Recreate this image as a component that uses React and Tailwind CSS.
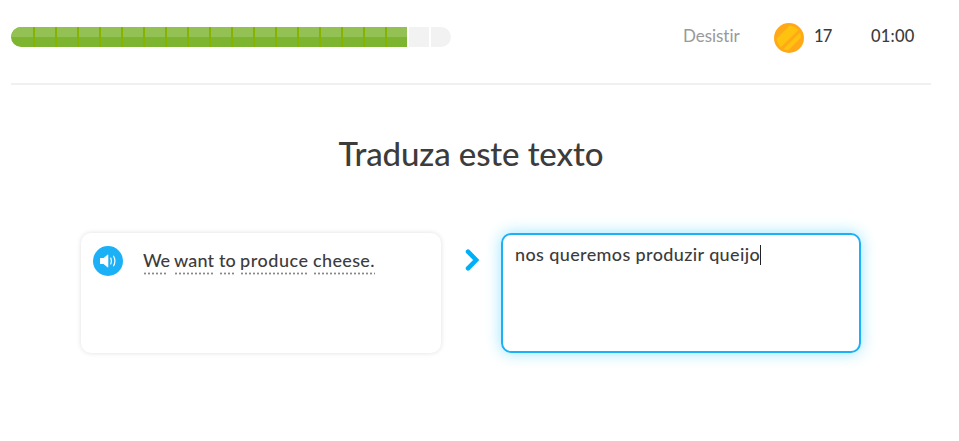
import React from "react";

const TOTAL = 20;
const DONE = 18;

function Progress() {
  return (
    <div className="flex h-5 w-[440px] overflow-hidden rounded-full">
      {Array.from({ length: TOTAL }, (_, i) => (
        <div
          key={i}
          className={
            (i === 0 ? "w-6" : i === TOTAL - 1 ? "w-5" : "w-[22px]") +
            " h-5 shrink-0 " +
            (i === TOTAL - 1 ? "" : "border-r-2 ") +
            (i < DONE - 1 ? "border-[#86b300] " : "border-white ") +
            (i < DONE ? "bg-[#7eb530]" : "bg-[#f2f2f2]")
          }
        >
          {i < DONE && <div className="h-2.5 bg-[#93c153]" />}
        </div>
      ))}
    </div>
  );
}

function Coin() {
  return (
    <svg width="30" height="30" viewBox="0 0 30 30">
      <circle cx="15" cy="15" r="15" fill="#ffa918" />
      <clipPath id="face">
        <circle cx="15" cy="15" r="12.2" />
      </clipPath>
      <g clipPath="url(#face)" stroke="#ffc20f">
        <path d="M-1 25.700 25.700 -1" strokeWidth="9.2" />
        <path d="M7 31.500 33 5.500" strokeWidth="4.200" />
      </g>
    </svg>
  );
}

function Speaker() {
  return (
    <svg width="30" height="30" viewBox="0 0 30 30" fill="none">
      <circle cx="15" cy="15" r="15" fill="#1cb0f6" />
      <path d="M7.5 12h3l4.300-3.400q.5-.3.5.3v12.2q0 .6-.5.3L10.500 18h-3q-.5 0-.5-.5v-5q0-.5.5-.5Z" fill="#fff" />
      <path d="M17.800 12q1.300 3 0 6M20.600 10.200q2.600 4.800 0 9.600" stroke="#fff" strokeWidth="1.200" strokeLinecap="round" />
    </svg>
  );
}

const words = [
  { text: "We", cls: "w-[31px] tracking-[-0.3px]", line: "w-[25px]" },
  { text: "want", cls: "w-[45px] tracking-[0.15px]", line: "w-[39px]" },
  { text: "to", cls: "w-[21px] tracking-[0px]", line: "w-[15px]" },
  { text: "produce", cls: "w-[73px] tracking-[0.55px]", line: "w-[68px]" },
  { text: "cheese.", cls: "w-[63px] tracking-[0.35px]", line: "w-[62px]" },
];

export default function App() {
  return (
    <main className="h-[441px] w-[959px] overflow-hidden bg-white pl-[11px] font-[Lato,'Open_Sans',sans-serif] text-[#3c3c3c]">
      <header className="flex h-[85px] w-[920px] items-start border-b-2 border-[#f0f0f0]">
        <div className="pt-[27px]">
          <Progress />
        </div>
        <div className="ml-[232px] w-[91px] pt-[24px] text-[17px] leading-6 tracking-[-0.05px] text-[#999]">Desistir</div>
        <div className="w-[40px] pt-[23px]">
          <Coin />
        </div>
        <div className="w-[57px] pt-[24px] text-[16.5px] font-medium leading-6 tracking-[-0.7px]">17</div>
        <div className="pt-[24px] text-[16.5px] font-medium leading-6 tracking-[0.2px]">01:00</div>
      </header>

      <h1 className="mt-[48px] w-[920px] text-center text-[33px] font-medium leading-10 tracking-[-0.12px]">Traduza este texto</h1>

      <section className="ml-[70px] mt-[60px] flex w-[780px]">
        <div className="flex h-[120px] w-[360px] rounded-[10px] pl-3 pt-[13px] shadow-[0_0_5px_rgba(0,0,0,0.13)]">
          <Speaker />
          <p className="ml-5 flex pt-[2px] text-[18px] font-medium leading-6">
            {words.map((w) => (
              <span key={w.text} className={w.cls + " block whitespace-nowrap"}>
                {w.text}
                <span className={w.line + " block h-[3px] bg-[radial-gradient(circle,#888_0.8px,transparent_1.300px)] bg-[length:4px_3px]"} />
              </span>
            ))}
          </p>
        </div>
        <div className="flex w-[60px] justify-center pl-0.5 pt-[15px]">
          <svg width="16" height="24" viewBox="0 0 16 24" fill="none">
            <path d="M4 3.700 12.200 12 4 20.300" stroke="#00aff9" strokeWidth="4.500" strokeLinecap="round" />
          </svg>
        </div>
        <div className="flex h-[120px] w-[360px] items-start rounded-[10px] border-2 border-[#1cb0f6] pl-3 pt-[10px] shadow-[0_0_15px_rgba(28,198,255,0.45)]">
          <span className="-mt-px w-[245px] whitespace-nowrap text-[18px] font-medium leading-[20px] tracking-[0.38px]">nos queremos produzir queijo</span>
          <span className="h-5 w-px bg-[#222]" />
        </div>
      </section>
    </main>
  );
}
